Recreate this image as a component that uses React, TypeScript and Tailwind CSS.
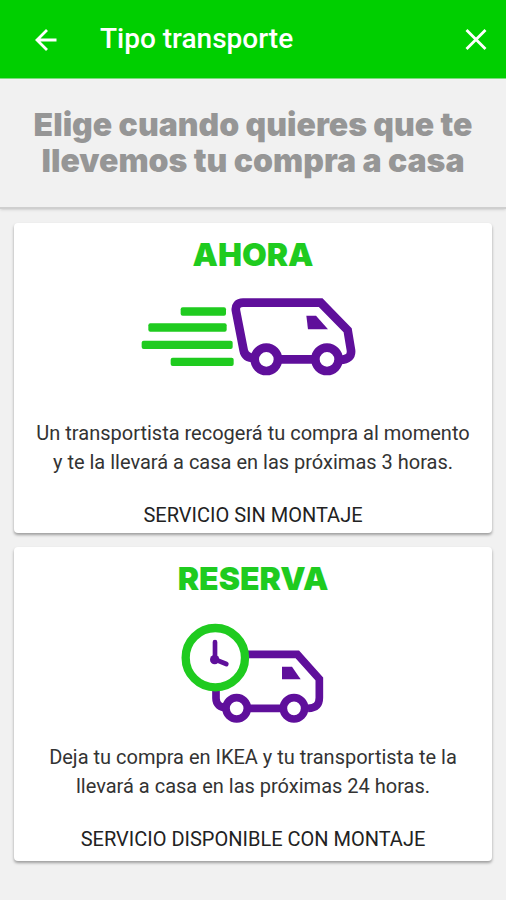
import cx from "clsx";
import { type ReactNode } from "react";

type Option = {
  id: string;
  title: string;
  icon: ReactNode;
  description: string;
  service: string;
};

const options: Option[] = [
  {
    id: "now",
    title: "AHORA",
    icon: <FastVan />,
    description:
      "Un transportista recogerá tu compra al momento y te la llevará a casa en las próximas 3 horas.",
    service: "SERVICIO SIN MONTAJE",
  },
  {
    id: "booking",
    title: "RESERVA",
    icon: <ClockVan />,
    description:
      "Deja tu compra en IKEA y tu transportista te la llevará a casa en las próximas 24 horas.",
    service: "SERVICIO DISPONIBLE CON MONTAJE",
  },
];

export default function App() {
  return (
    <div className="min-h-screen bg-[#f1f1f1] font-['Roboto',sans-serif]">
      <TopBar title="Tipo transporte" />

      <section className="border-b-2 border-[#cfcfcf] px-6 pt-7 pb-7 shadow-sm">
        <h2 className="text-center font-['Inter',sans-serif] text-[32px] leading-9 font-black text-balance text-[#969696]">
          Elige cuando quieres que te llevemos tu compra a casa
        </h2>
      </section>

      <main className="flex flex-col gap-3.5 px-3.5 py-3.5">
        {options.map((option) => (
          <OptionCard key={option.id} option={option} />
        ))}
      </main>
    </div>
  );
}

function TopBar({ title }: { title: string }) {
  return (
    <header className="flex items-center border-b border-[#7fe07f] bg-[#00cf00] px-6 py-4 text-white">
      <button type="button" aria-label="Volver" className="p-2">
        <svg viewBox="0 0 28 28" className="h-7 w-7" aria-hidden="true">
          <path
            d="M24.5 15H5M15 5L5 15l10 10"
            fill="none"
            stroke="currentColor"
            strokeWidth="2.8"
          />
        </svg>
      </button>
      <h1 className="ml-8 flex-1 text-[28px] leading-[46px] font-medium">
        {title}
      </h1>
      <button type="button" aria-label="Cerrar" className="-mr-4 p-2">
        <svg viewBox="0 0 28 28" className="h-7 w-7" aria-hidden="true">
          <path
            d="M4.5 5l19 19M23.5 5L4.5 24"
            fill="none"
            stroke="currentColor"
            strokeWidth="2.8"
          />
        </svg>
      </button>
    </header>
  );
}

function OptionCard({ option }: { option: Option }) {
  return (
    <button
      type="button"
      className={cx(
        "flex w-full flex-col items-center rounded-sm bg-white px-5 pt-4 pb-1 text-center last:pb-2",
        "shadow-[0_2px_3px_rgba(0,0,0,0.35)]",
      )}
    >
      <span className="font-['Inter',sans-serif] text-[32px] leading-8 font-black text-[#1fcb1f]">
        {option.title}
      </span>
      {option.icon}
      <span className="text-xl leading-[29px] text-[#333]">
        {option.description}
      </span>
      <span className="mt-6 text-xl leading-7 text-[#222]">
        {option.service}
      </span>
    </button>
  );
}

function FastVan() {
  return (
    <svg viewBox="0 0 750 444" className="h-[148px] w-[250px]" aria-hidden="true">
      <g fill="#1fcb1f">
        <rect x="158" y="109" width="136" height="25" rx="6" />
        <rect x="61" y="157" width="235" height="25" rx="6" />
        <rect x="41" y="209" width="273" height="25" rx="6" />
        <rect x="128" y="260" width="189" height="25" rx="6" />
      </g>
      <g fill="none" stroke="#5f0f9b" strokeWidth="26">
        <path d="M384 261C362 262 350 254 347 238L324 120C321 104 330 95 345 95H578L659 178L669 238C671 256 660 266 636 267" />
        <path d="M450 265H564" />
        <circle cx="415" cy="265" r="35" />
        <circle cx="597" cy="265" r="35" />
      </g>
      <path d="M535 134H564L600 175H540Z" fill="#5f0f9b" />
    </svg>
  );
}

function ClockVan() {
  return (
    <svg viewBox="0 0 750 444" className="h-[148px] w-[250px]" aria-hidden="true">
      <g fill="none" stroke="#5f0f9b" strokeWidth="23">
        <path d="M340 178H508L574 252V308C574 328 564 339 540 340" />
        <path d="M264 280V310C264 328 276 338 296 338" />
        <path d="M360 340H466" />
        <circle cx="326" cy="340" r="32" />
        <circle cx="498" cy="340" r="32" />
      </g>
      <path d="M462 215H492L518 253H462Z" fill="#5f0f9b" />
      <circle
        cx="262"
        cy="188"
        r="89"
        fill="#fff"
        stroke="#1fcb1f"
        strokeWidth="25"
      />
      <path
        d="M261 141V193L295 207"
        fill="none"
        stroke="#5f0f9b"
        strokeWidth="14"
        strokeLinecap="round"
      />
      <circle cx="260" cy="194" r="14" fill="#5f0f9b" />
    </svg>
  );
}
